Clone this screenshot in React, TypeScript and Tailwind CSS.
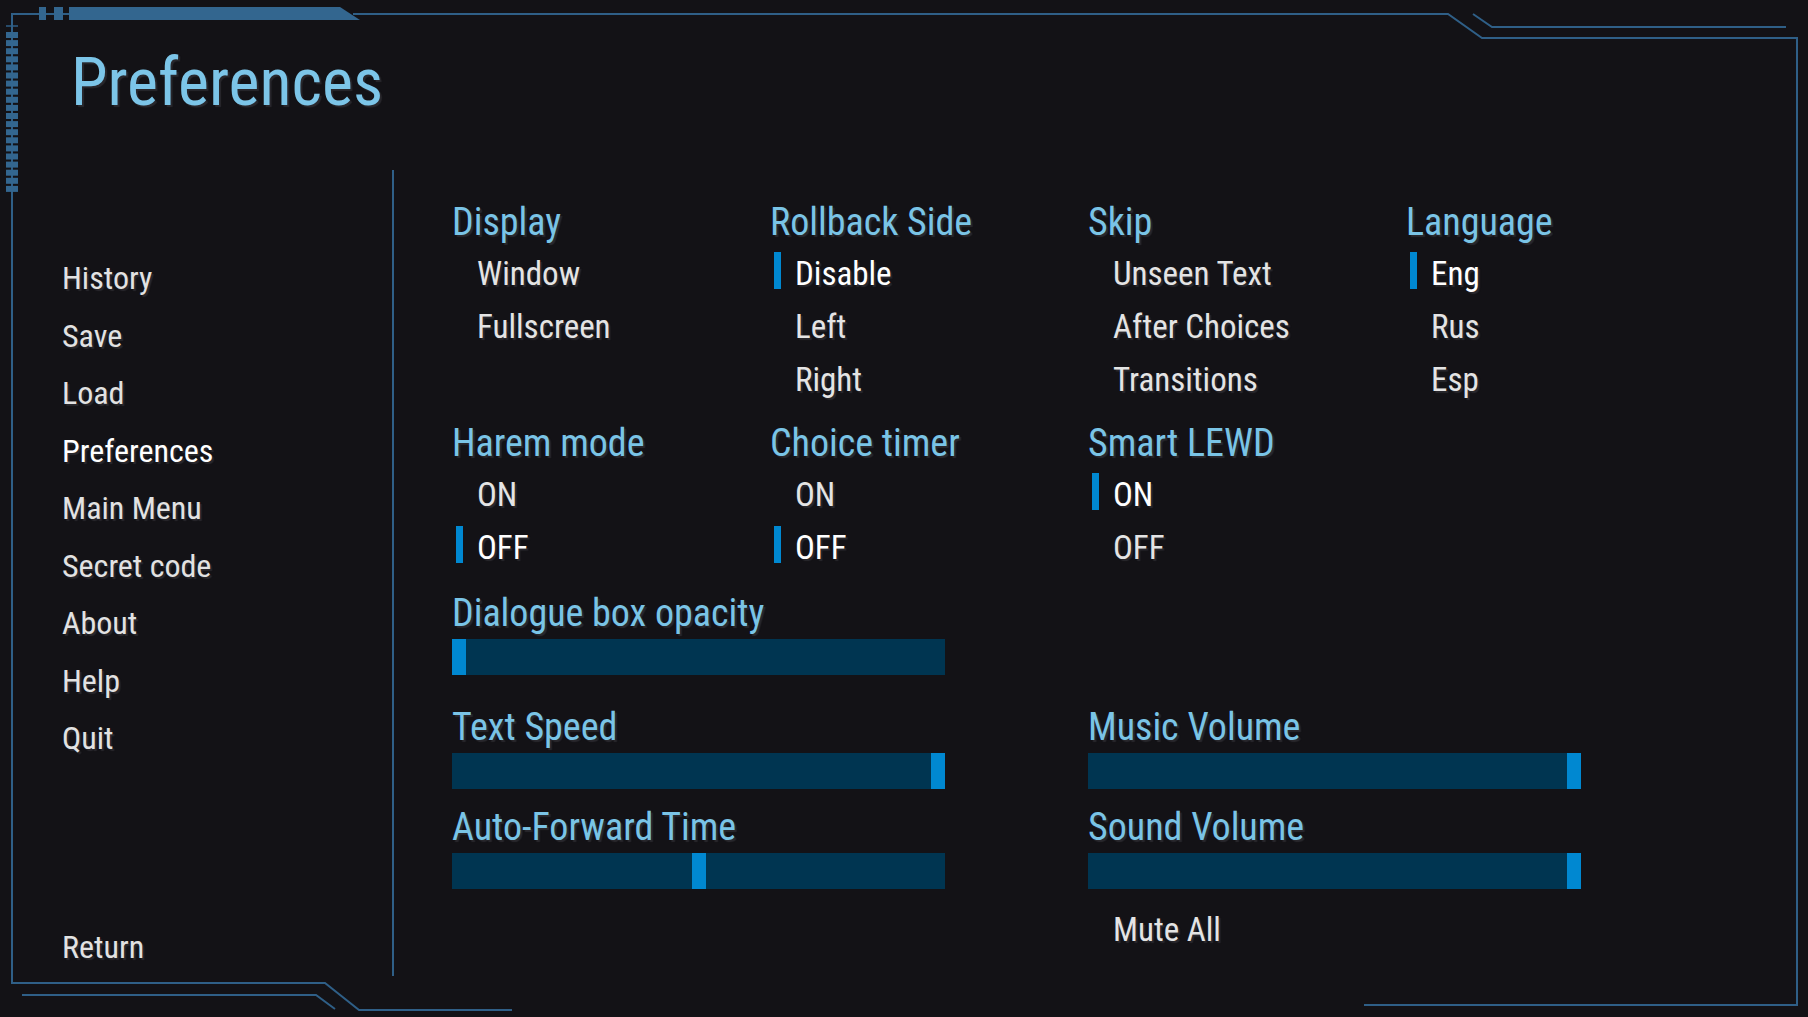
import React from "react";

const LINE = "#2f5f87";

type Group = { title: string; options: string[]; selected?: number };

const topGroups: Group[] = [
  { title: "Display", options: ["Window", "Fullscreen"] },
  { title: "Rollback Side", options: ["Disable", "Left", "Right"], selected: 0 },
  { title: "Skip", options: ["Unseen Text", "After Choices", "Transitions"] },
  { title: "Language", options: ["Eng", "Rus", "Esp"], selected: 0 },
  { title: "Harem mode", options: ["ON", "OFF"], selected: 1 },
  { title: "Choice timer", options: ["ON", "OFF"], selected: 1 },
  { title: "Smart LEWD", options: ["ON", "OFF"], selected: 0 },
];

const navItems = ["History", "Save", "Load", "Preferences", "Main Menu", "Secret code", "About", "Help", "Quit"];

function Frame() {
  const ladder = Array.from({ length: 20 }, (_, i) => 32 + i * 8.1);
  return (
    <svg className="absolute inset-0 pointer-events-none" width="1808" height="1017" viewBox="0 0 1808 1017">
      <g fill="none" stroke={LINE} strokeWidth="2">
        <path d="M39 14 H12 V983 H325 L359 1010 H512" />
        <path d="M22 995 H316 L335 1009" />
        <path d="M46 14 H54 M63 14 H69" />
        <path d="M353 14 H1448 L1482 38 H1797 V1005 H1364" />
        <path d="M1473 14 L1492 27 H1786" />
        <path d="M6 26 H18" strokeWidth="1.5" />
      </g>
      <g fill="#33668f">
        <rect x="39" y="7" width="7" height="13" />
        <rect x="54" y="7" width="9" height="13" />
        <polygon points="69,7 340,7 360,20 69,20" />
        {ladder.map((y) => (
          <rect key={y} x="6" y={y} width="12" height="6" />
        ))}
      </g>
    </svg>
  );
}

function Option({ label, active }: { label: string; active?: boolean }) {
  return (
    <div className="flex items-start h-[53px]">
      <div className={`ml-[4px] mt-[5px] w-[7px] h-[37px] ${active ? "bg-[#0088d1]" : ""}`} />
      <span
        className={`ml-[14px] text-[33px] leading-[53px] ${active ? "text-white" : "text-[#e4e4e4]"}`}
      >
        {label}
      </span>
    </div>
  );
}

function Slider({ value }: { value: number }) {
  return (
    <div className="relative w-[493px] h-[36px] bg-[#003551]">
      <div
        className="absolute top-0 h-[36px] w-[14px] bg-[#0088d1]"
        style={{ left: `${value * (493 - 14)}px` }}
      />
    </div>
  );
}

export default function App() {
  return (
    <div className="relative w-[1808px] h-[1017px] overflow-hidden bg-[#131216] font-['Roboto_Condensed','Roboto',sans-serif] [text-shadow:2px_2px_1px_#29282d]">
      <Frame />

      <div className="h-[170px] pt-[49px] pl-[71px]">
        <h1 className="text-[66px] leading-[67px] text-[#7cc5e8]">Preferences</h1>
      </div>

      <div className="flex h-[806px]">
        {/* left nav */}
        <div className="w-[394px] border-r-2 border-[#2f5f87] pl-[62px] pt-[80px] flex flex-col">
          {navItems.map((item) => (
            <div
              key={item}
              className={`text-[32px] leading-[57.5px] ${item === "Preferences" ? "text-white" : "text-[#e2e2e2]"}`}
            >
              {item}
            </div>
          ))}
          <div className="mt-auto text-[32px] leading-[57.5px] text-[#e2e2e2]">Return</div>
        </div>

        {/* settings */}
        <div className="pl-[58px] pt-[26px]">
          <div className="grid grid-cols-[318px_318px_318px_318px] gap-y-[11px]">
            {topGroups.map((g) => (
              <div key={g.title}>
                <div className="text-[38px] leading-[52px] text-[#7ac4e6]">{g.title}</div>
                <div className="-mt-[1px]">
                  {g.options.map((o, i) => (
                    <Option key={o} label={o} active={g.selected === i} />
                  ))}
                </div>
              </div>
            ))}
          </div>

          <div className="mt-[15px]">
            <div className="text-[38px] leading-[48px] text-[#7ac4e6]">Dialogue box opacity</div>
            <div className="mt-[2px]">
              <Slider value={0} />
            </div>
          </div>

          <div className="mt-[28px] grid grid-cols-[636px_636px]">
            <div>
              <div className="text-[38px] leading-[48px] text-[#7ac4e6]">Text Speed</div>
              <div className="mt-[2px]">
                <Slider value={1} />
              </div>
              <div className="mt-[14px] text-[38px] leading-[48px] text-[#7ac4e6]">Auto-Forward Time</div>
              <div className="mt-[2px]">
                <Slider value={0.5} />
              </div>
            </div>
            <div>
              <div className="text-[38px] leading-[48px] text-[#7ac4e6]">Music Volume</div>
              <div className="mt-[2px]">
                <Slider value={1} />
              </div>
              <div className="mt-[14px] text-[38px] leading-[48px] text-[#7ac4e6]">Sound Volume</div>
              <div className="mt-[2px]">
                <Slider value={1} />
              </div>
              <div className="mt-[14px]">
                <Option label="Mute All" />
              </div>
            </div>
          </div>
        </div>
      </div>
    </div>
  );
}
